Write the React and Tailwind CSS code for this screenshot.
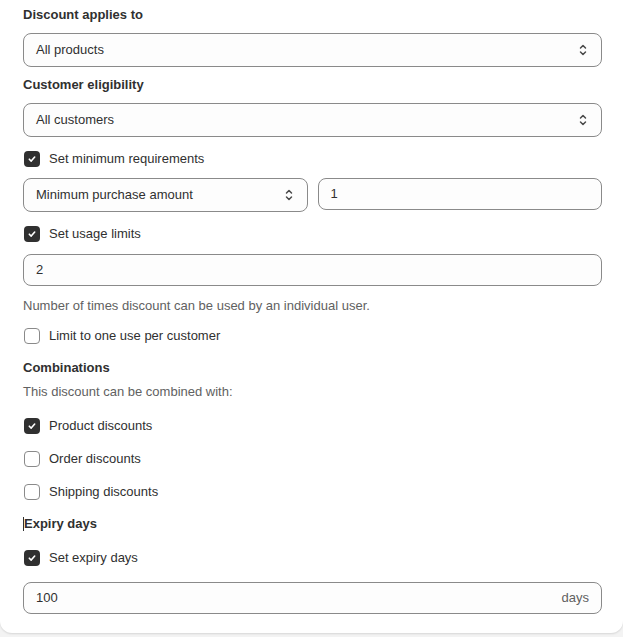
import React from "react";

const font = { fontFamily: '"Liberation Sans", Arial, sans-serif' };

function Chevrons() {
  return (
    <svg width="10" height="14" viewBox="0 0 10 14" fill="none" stroke="#4a4a4a" strokeWidth="1.5" strokeLinecap="round" strokeLinejoin="round">
      <path d="M2.5 5 L5 2.5 L7.5 5" />
      <path d="M2.5 9 L5 11.5 L7.5 9" />
    </svg>
  );
}

function Select({ value, className = "" }) {
  return (
    <div className={"flex h-[34px] items-center justify-between rounded-lg border border-[#8a8a8a] bg-[#fdfdfd] pl-3 pr-[13px] text-[13px] text-[#303030] " + className}>
      <span>{value}</span>
      <Chevrons />
    </div>
  );
}

function Input({ value, suffix, className = "" }) {
  return (
    <div className={"flex h-[32px] items-center justify-between rounded-lg border border-[#8a8a8a] bg-[#fdfdfd] pl-3 pr-3 text-[13px] text-[#303030] " + className}>
      <span>{value}</span>
      {suffix && <span className="text-[#616161]">{suffix}</span>}
    </div>
  );
}

function Check({ checked, label, className = "" }) {
  return (
    <div className={"flex h-5 items-center gap-[9px] pl-px text-[13px] text-[#303030] " + className}>
      {checked ? (
        <span className="flex h-4 w-4 items-center justify-center rounded-[4px] bg-[#303030]">
          <svg width="10" height="10" viewBox="0 0 10 10" fill="none" stroke="white" strokeWidth="1.6" strokeLinecap="round" strokeLinejoin="round">
            <path d="M2.3 5.2 L4.2 7.1 L7.7 3" />
          </svg>
        </span>
      ) : (
        <span className="h-4 w-4 rounded-[4px] border border-[#8a8a8a] bg-white" />
      )}
      <span>{label}</span>
    </div>
  );
}

function Label({ children, className = "" }) {
  return <div className={"h-5 leading-5 text-[13px] font-bold text-[#303030] " + className}>{children}</div>;
}

function Help({ children, className = "" }) {
  return <div className={"h-5 leading-5 text-[13px] text-[#616161] " + className}>{children}</div>;
}

export default function App() {
  return (
    <div className="h-[637px] w-[623px] bg-[#f3f3f3]" style={font}>
      <div className="flex h-[633px] flex-col rounded-b-xl bg-white pl-[23px] pr-[21px] pt-[5px] shadow-[0_1px_2px_rgba(0,0,0,0.12)]">
        <Label>Discount applies to</Label>
        <Select value="All products" className="mt-[8px]" />
        <Label className="mt-[8px]">Customer eligibility</Label>
        <Select value="All customers" className="mt-[8px]" />
        <Check checked label="Set minimum requirements" className="mt-[12px]" />
        <div className="mt-[9px] grid grid-cols-2 gap-[10px]">
          <Select value="Minimum purchase amount" />
          <Input value="1" />
        </div>
        <Check checked label="Set usage limits" className="mt-[12px]" />
        <Input value="2" className="mt-[10px]" />
        <Help className="mt-[10px]">Number of times discount can be used by an individual user.</Help>
        <Check label="Limit to one use per customer" className="mt-[10px]" />
        <Label className="mt-[12px]">Combinations</Label>
        <Help className="mt-[4px]">This discount can be combined with:</Help>
        <Check checked label="Product discounts" className="mt-[14px]" />
        <Check label="Order discounts" className="mt-[13px]" />
        <Check label="Shipping discounts" className="mt-[13px]" />
        <Label className="mt-[12px] flex items-center">
          <span className="inline-block h-[14px] w-px bg-[#303030]" />
          Expiry days
        </Label>
        <Check checked label="Set expiry days" className="mt-[14px]" />
        <Input value="100" suffix="days" className="mt-[14px]" />
      </div>
    </div>
  );
}
